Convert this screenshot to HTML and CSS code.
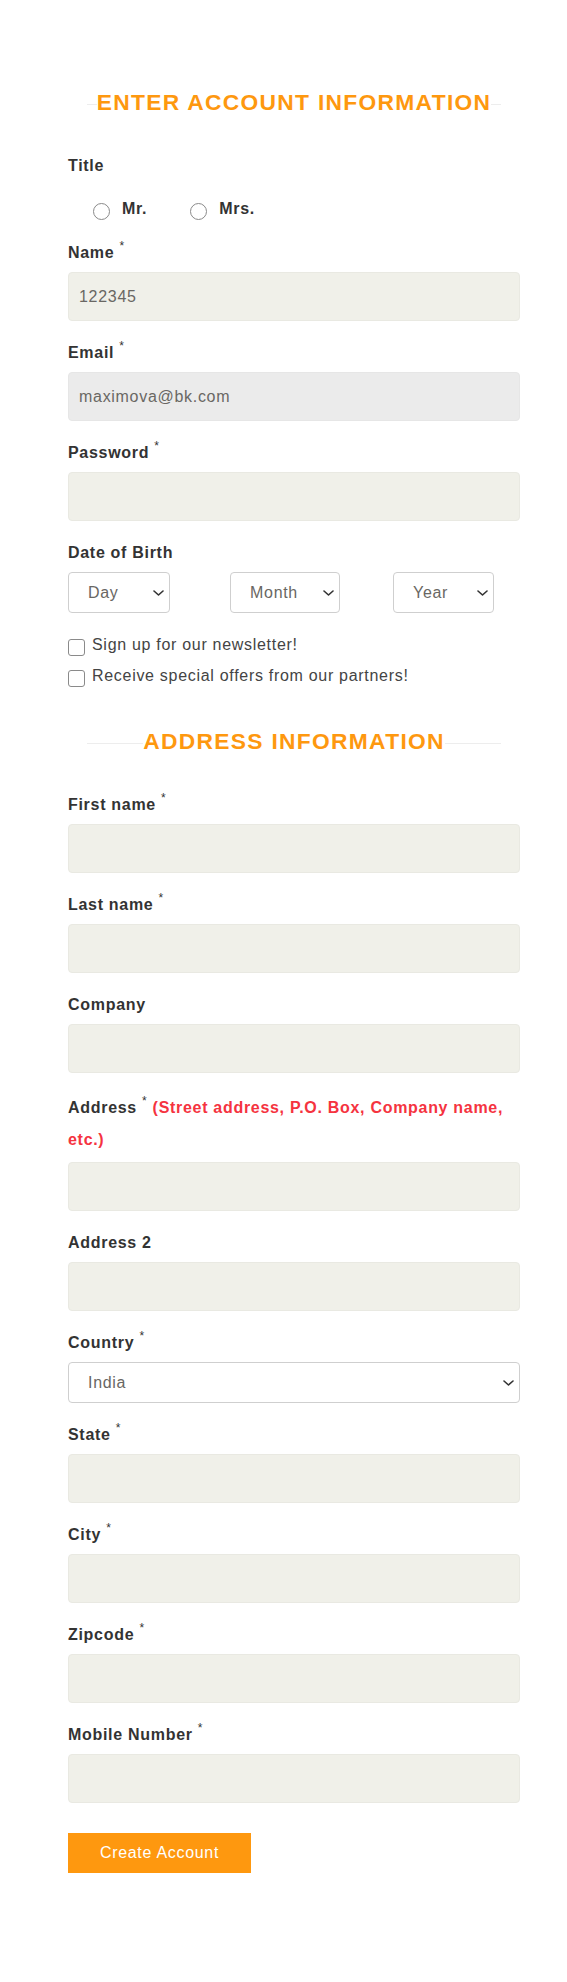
FILE: index.html
```html
<!DOCTYPE html>
<html lang="en">
<head>
<meta charset="utf-8">
<title>Signup</title>
<link rel="stylesheet" href="styles.css">
</head>
<body>
<div class="page">
  <form class="form">
    <h2 class="title"><span>ENTER ACCOUNT INFORMATION</span></h2>

    <span class="lbl">Title</span>
    <div class="radios">
      <label class="radio"><input type="radio" name="title"><span>Mr.</span></label>
      <label class="radio"><input type="radio" name="title"><span>Mrs.</span></label>
    </div>

    <label class="lbl">Name <span class="req">*</span></label>
    <input class="inp" type="text" value="122345">

    <label class="lbl">Email <span class="req">*</span></label>
    <input class="inp inp-disabled" type="text" value="maximova@bk.com" readonly>

    <label class="lbl">Password <span class="req">*</span></label>
    <input class="inp" type="password">

    <label class="lbl">Date of Birth</label>
    <div class="dob">
      <select class="sel sel-day"><option>Day</option></select>
      <select class="sel sel-month"><option>Month</option></select>
      <select class="sel sel-year"><option>Year</option></select>
    </div>

    <div class="checks">
      <label class="check"><input type="checkbox"><span>Sign up for our newsletter!</span></label>
      <label class="check"><input type="checkbox"><span>Receive special offers from our partners!</span></label>
    </div>

    <h2 class="title title-address"><span>ADDRESS INFORMATION</span></h2>

    <label class="lbl">First name <span class="req">*</span></label>
    <input class="inp" type="text">

    <label class="lbl">Last name <span class="req">*</span></label>
    <input class="inp" type="text">

    <label class="lbl">Company</label>
    <input class="inp" type="text">

    <label class="lbl lbl-address">Address <span class="req">*</span> <span class="hint">(Street address, P.O. Box, Company name,</span> <span class="hint">etc.)</span></label>
    <input class="inp" type="text">

    <label class="lbl">Address 2</label>
    <input class="inp" type="text">

    <label class="lbl">Country <span class="req">*</span></label>
    <select class="sel sel-country"><option>India</option></select>

    <label class="lbl">State <span class="req">*</span></label>
    <input class="inp" type="text">

    <label class="lbl">City <span class="req">*</span></label>
    <input class="inp" type="text">

    <label class="lbl">Zipcode <span class="req">*</span></label>
    <input class="inp" type="text">

    <label class="lbl">Mobile Number <span class="req">*</span></label>
    <input class="inp" type="text">

    <button class="btn" type="button">Create Account</button>
  </form>
</div>
</body>
</html>
```

FILE: styles.css
```css
html, body {
  margin: 0;
  padding: 0;
  background: #ffffff;
}

body {
  font-family: "Liberation Sans", Arial, sans-serif;
  font-size: 16px;
  letter-spacing: 0.7px;
  color: #333333;
}

.page {
  padding: 89px 0 60px 68px;
}

.form {
  width: 452px;
  margin: 0;
}

/* Section headings with a faint rule behind */
.title {
  display: flex;
  align-items: center;
  height: 26px;
  margin: 0 19px 35px;
  font-size: 22.8px;
  line-height: 26px;
  font-weight: 700;
  letter-spacing: 1.3px;
  color: #fe980f;
  white-space: nowrap;
}

.title::before,
.title::after {
  content: "";
  flex: 1;
  min-width: 0;
  height: 1px;
  margin-top: 4px;
  background: #ededed;
}

.title-address {
  margin-top: 37px;
}

/* Labels */
.lbl {
  display: block;
  font-size: 16px;
  line-height: 32px;
  font-weight: 700;
  color: #333333;
}

.req {
  font-size: 12px;
  line-height: 12px;
  font-weight: 400;
  vertical-align: 8px;
  color: #333333;
}

.lbl-address {
  padding: 3px 0;
}

.hint {
  color: #f5333f;
}

/* Radios */
.radios {
  display: flex;
  align-items: center;
  height: 55px;
  padding-left: 25px;
}

.radio {
  display: flex;
  align-items: center;
  font-weight: 700;
  font-size: 16px;
  line-height: 18px;
  color: #333333;
}

.radio + .radio {
  margin-left: 43px;
}

.radio input {
  appearance: none;
  -webkit-appearance: none;
  box-sizing: border-box;
  width: 17px;
  height: 17px;
  margin: 4px 12px 0 0;
  border: 1px solid #8a8a8a;
  border-radius: 50%;
  background: #ffffff;
}

.radio span {
  margin-bottom: 2px;
}

/* Inputs */
.inp {
  display: block;
  box-sizing: border-box;
  width: 100%;
  height: 49px;
  margin: 3px 0 16px;
  padding: 0 10px;
  background: #f0f0e9;
  border: 1px solid #e9e9e2;
  border-radius: 4px;
  font-family: "Liberation Sans", Arial, sans-serif;
  font-size: 16px;
  letter-spacing: 0.7px;
  color: #696763;
  outline: none;
}

.inp-disabled {
  background: #ebebeb;
  border-color: #e6e6e6;
}

/* Selects */
.dob {
  display: grid;
  grid-template-columns: 162px 163px 1fr;
  align-items: start;
  margin: 3px 0 16px;
}

.sel {
  appearance: none;
  -webkit-appearance: none;
  display: block;
  box-sizing: border-box;
  height: 41px;
  padding: 0 22px 0 19px;
  background: #ffffff url("data:image/svg+xml,%3Csvg xmlns='http://www.w3.org/2000/svg' width='11' height='6' viewBox='0 0 11 6'%3E%3Cpath d='M1 1l4.5 4 4.5-4' fill='none' stroke='%23333' stroke-width='1.6' stroke-linecap='round' stroke-linejoin='round'/%3E%3C/svg%3E") no-repeat right 5px center;
  background-size: 11px 6px;
  border: 1px solid #cfcfcf;
  border-radius: 4px;
  font-family: "Liberation Sans", Arial, sans-serif;
  font-size: 16px;
  letter-spacing: 0.7px;
  color: #696763;
  outline: none;
}

.sel-day { width: 102px; }
.sel-month { width: 110px; }
.sel-year { width: 101px; }

.sel-country {
  width: 100%;
  margin: 3px 0 16px;
}

/* Checkboxes */
.checks {
  display: flex;
  flex-direction: column;
}

.check {
  display: flex;
  align-items: center;
  height: 31px;
  font-size: 16px;
  line-height: 31px;
  color: #444444;
}

.check input {
  appearance: none;
  -webkit-appearance: none;
  box-sizing: border-box;
  width: 17px;
  height: 17px;
  margin: 6px 7px 0 0;
  border: 1px solid #8a8a8a;
  border-radius: 3px;
  background: #ffffff;
}

/* Button */
.btn {
  display: block;
  width: 183px;
  height: 40px;
  margin-top: 30px;
  padding: 0;
  border: 0;
  border-radius: 0;
  background: #fe980f;
  color: #ffffff;
  font-family: "Liberation Sans", Arial, sans-serif;
  font-size: 16px;
  letter-spacing: 0.7px;
  cursor: pointer;
}
```
